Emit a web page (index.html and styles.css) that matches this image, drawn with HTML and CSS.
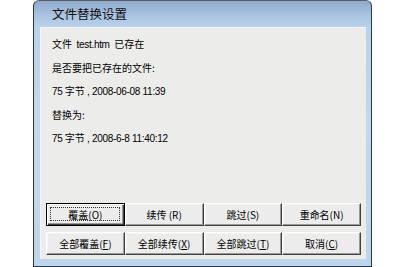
FILE: index.html
```html
<!DOCTYPE html>
<html lang="zh-CN">
<head>
<meta charset="utf-8">
<link rel="stylesheet" href="styles.css">
</head>
<body>
<div class="window">
  <div class="titlebar">文件替换设置</div>
  <div class="client">
    <div class="msg">
      <div class="line">文件 &nbsp;<span class="lat">test.htm</span> &nbsp;已存在</div>
      <div class="line">是否要把已存在的文件:</div>
      <div class="line"><span class="lat">75</span> 字节 <span class="lat">, 2008-06-08 11:39</span></div>
      <div class="line">替换为:</div>
      <div class="line"><span class="lat">75</span> 字节 <span class="lat">, 2008-6-8 11:40:12</span></div>
    </div>
    <div class="buttons">
      <div class="btn default">覆盖(O)</div>
      <div class="btn">续传 (R)</div>
      <div class="btn">跳过(S)</div>
      <div class="btn">重命名(N)</div>
      <div class="btn">全部覆盖(<u>F</u>)</div>
      <div class="btn">全部续传(<u>X</u>)</div>
      <div class="btn">全部跳过(<u>T</u>)</div>
      <div class="btn">取消(<u>C</u>)</div>
    </div>
  </div>
</div>
</body>
</html>
```
FILE: styles.css
```css
html, body {
  margin: 0;
  padding: 0;
  background: #ffffff;
}
body {
  width: 400px;
  height: 267px;
  overflow: hidden;
  font-family: "Liberation Sans Narrow", "Noto Sans CJK SC", sans-serif;
  font-size: 10px;
  color: #000;
}
.window {
  box-sizing: border-box;
  margin-left: 33px;
  width: 339px;
  height: 267px;
  border: 1px solid #2a3644;
  border-right-color: #1d3d50;
  border-bottom-color: #1d3d50;
  border-top-color: #5a5f66;
  border-radius: 6px 6px 0 0;
  background: linear-gradient(to bottom, #8eabcd 0px, #a9c3e0 14px, #bad2eb 26px, #c3d8ee 120px, #bfd5ec 100%);
  padding: 0 5px 7px 6px;
  display: flex;
  flex-direction: column;
}
.titlebar {
  height: 26px;
  box-sizing: border-box;
  padding-left: 12px;
  padding-top: 4px;
  font-family: "Noto Sans CJK SC", sans-serif;
  font-size: 12.5px;
  line-height: 18px;
  color: #111;
}
.client {
  flex: 1;
  background: #ececea;
  box-shadow: inset 1px 1px #f6f6f4;
  display: flex;
  flex-direction: column;
  padding: 5px 4px 4px 6px;
}
.msg {
  padding-left: 6px;
}
.line {
  height: 23.5px;
  line-height: 23.5px;
  white-space: nowrap;
}
.lat {
  font-family: "Liberation Sans Narrow", "Liberation Sans", sans-serif;
  letter-spacing: -0.3px;
}
.buttons {
  margin-top: auto;
  display: grid;
  grid-template-columns: repeat(4, 78.75px);
  grid-auto-rows: 23px;
  row-gap: 6px;
}
.btn {
  position: relative;
  box-sizing: border-box;
  border: 1px solid;
  border-color: #ffffff #404040 #404040 #ffffff;
  box-shadow: inset -1px -1px #9a9a9a, inset 1px 1px #f4f4f4;
  background: #ececec;
  display: flex;
  align-items: center;
  justify-content: center;
  line-height: 12px;
  padding-top: 1px;
  white-space: nowrap;
}
.btn u {
  text-decoration-thickness: 1px;
  text-underline-offset: 1px;
}
.btn.default {
  border-color: #000;
  box-shadow: inset 1px 1px #ffffff, inset -1px -1px #404040, inset -2px -2px #9a9a9a;
}
.btn.default::after {
  content: "";
  position: absolute;
  left: 3px;
  top: 3px;
  right: 4px;
  bottom: 4px;
  border: 1px dotted #333;
}
```
